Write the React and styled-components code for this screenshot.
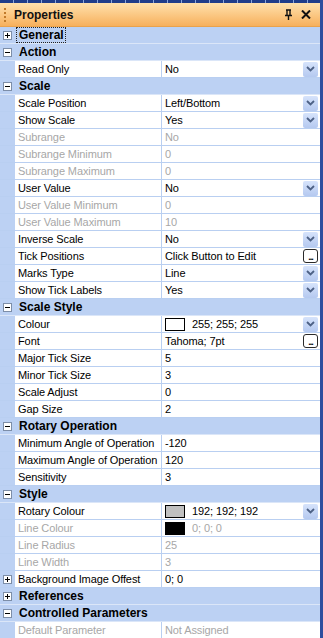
import styled, { createGlobalStyle } from "styled-components";

const Global = createGlobalStyle`
  html, body { margin: 0; padding: 0; background: #bcd1f3; }
  body { font-family: Tahoma, "Liberation Sans", Arial, sans-serif; font-size: 11px; }
`;

const Panel = styled.div`
  width: 323px;
  height: 638px;
  overflow: hidden;
  background: #bcd1f3;
  border-right: 3px solid #2d4e9e;
  box-sizing: border-box;
  display: flex;
  flex-direction: column;
`;

const TopEdge = styled.div`
  height: 3px;
  flex: none;
  background: repeating-linear-gradient(90deg, #1f3d8a 0 13px, #8aa6dc 13px 14px);
`;

const TitleBar = styled.div`
  height: 23px;
  flex: none;
  display: flex;
  align-items: center;
  padding: 0 8px 0 4px;
  background: linear-gradient(#ffe1ad, #f7b05c);
  border-bottom: 1px solid #e9a24c;
`;

const Grip = styled.div`
  width: 2px;
  height: 14px;
  margin-right: 8px;
  background: repeating-linear-gradient(#c07a2a 0 2px, transparent 2px 4px);
`;

const Title = styled.div`
  flex: 1;
  font-weight: bold;
  font-size: 12px;
  color: #111;
`;

const TitleIcon = styled.div`
  width: 12px;
  margin-left: 6px;
  display: flex;
  justify-content: center;
`;

const Row = styled.div`
  height: 16px;
  flex: none;
  display: flex;
  border-bottom: 1px solid ${(p) => (p.$cat ? "#dbe6f8" : "#b9cff1")};
  background: ${(p) => (p.$cat ? "#bcd1f3" : "transparent")};
`;

const Gutter = styled.div`
  width: 15px;
  flex: none;
  display: flex;
  align-items: center;
  justify-content: center;
  background: #bcd1f3;
`;

const Box = styled.div`
  width: 7px;
  height: 7px;
  border: 1px solid #7d8ea8;
  background: #fff;
  position: relative;
  &::before {
    content: "";
    position: absolute;
    left: 1px;
    top: 3px;
    width: 5px;
    height: 1px;
    background: #000;
  }
  &::after {
    content: "";
    display: ${(p) => (p.$open ? "none" : "block")};
    position: absolute;
    left: 3px;
    top: 1px;
    width: 1px;
    height: 5px;
    background: #000;
  }
`;

const CatLabel = styled.div`
  font-weight: bold;
  font-size: 12px;
  line-height: 14px;
  padding: 0 1px 0 2px;
  margin-left: 1px;
  color: #000;
  align-self: center;
  border: 1px dotted ${(p) => (p.$focus ? "#222" : "transparent")};
`;

const Name = styled.div`
  width: 143px;
  flex: none;
  padding-left: 3px;
  line-height: 16px;
  letter-spacing: -0.1px;
  background: #fff;
  color: ${(p) => (p.$dim ? "#a7a7a7" : "#000")};
  border-right: 1px solid #b9cff1;
  white-space: nowrap;
  overflow: hidden;
`;

const Value = styled.div`
  flex: 1;
  display: flex;
  align-items: center;
  padding-left: 3px;
  letter-spacing: -0.1px;
  background: #fff;
  color: ${(p) => (p.$dim ? "#a7a7a7" : "#000")};
  white-space: nowrap;
`;

const ValueText = styled.span`
  flex: 1;
  line-height: 16px;
`;

const Swatch = styled.span`
  width: 18px;
  height: 11px;
  border: 1px solid #000;
  background: ${(p) => p.$color};
  margin-right: 7px;
`;

const DropBtn = styled.div`
  width: 15px;
  height: 15px;
  margin-right: 2px;
  border-radius: 2px;
  background: linear-gradient(#d6e3fb, #b5c9f0);
  display: flex;
  align-items: center;
  justify-content: center;
`;

const DotsBtn = styled.div`
  width: 13px;
  height: 12px;
  margin-right: 2px;
  border: 1px solid #2a2a2a;
  border-radius: 3px;
  background: #fff;
  font-size: 9px;
  line-height: 14px;
  text-align: center;
  font-weight: bold;
  letter-spacing: -1px;
  overflow: hidden;
`;

const Chevron = () => (
  <svg width="9" height="6" viewBox="0 0 9 6">
    <path d="M1 1 L4.5 4.5 L8 1" fill="none" stroke="#4d6185" strokeWidth="1.8" />
  </svg>
);

const rows = [
  { cat: "General", closed: true, focus: true },
  { cat: "Action" },
  { n: "Read Only", v: "No", btn: "drop" },
  { cat: "Scale" },
  { n: "Scale Position", v: "Left/Bottom", btn: "drop" },
  { n: "Show Scale", v: "Yes", btn: "drop" },
  { n: "Subrange", v: "No", dim: true },
  { n: "Subrange Minimum", v: "0", dim: true },
  { n: "Subrange Maximum", v: "0", dim: true },
  { n: "User Value", v: "No", btn: "drop" },
  { n: "User Value Minimum", v: "0", dim: true },
  { n: "User Value Maximum", v: "10", dim: true },
  { n: "Inverse Scale", v: "No", btn: "drop" },
  { n: "Tick Positions", v: "Click Button to Edit", btn: "dots" },
  { n: "Marks Type", v: "Line", btn: "drop" },
  { n: "Show Tick Labels", v: "Yes", btn: "drop" },
  { cat: "Scale Style" },
  { n: "Colour", v: "255; 255; 255", sw: "#fff", btn: "drop" },
  { n: "Font", v: "Tahoma; 7pt", btn: "dots" },
  { n: "Major Tick Size", v: "5" },
  { n: "Minor Tick Size", v: "3" },
  { n: "Scale Adjust", v: "0" },
  { n: "Gap Size", v: "2" },
  { cat: "Rotary Operation" },
  { n: "Minimum Angle of Operation", v: "-120" },
  { n: "Maximum Angle of Operation", v: "120" },
  { n: "Sensitivity", v: "3" },
  { cat: "Style" },
  { n: "Rotary Colour", v: "192; 192; 192", sw: "#c0c0c0", btn: "drop" },
  { n: "Line Colour", v: "0; 0; 0", sw: "#000", dim: true },
  { n: "Line Radius", v: "25", dim: true },
  { n: "Line Width", v: "3", dim: true },
  { n: "Background Image Offest", v: "0; 0", expand: true },
  { cat: "References", closed: true },
  { cat: "Controlled Parameters" },
  { n: "Default Parameter", v: "Not Assigned", dim: true },
];

export default function App() {
  return (
    <Panel>
      <Global />
      <TopEdge />
      <TitleBar>
        <Grip />
        <Title>Properties</Title>
        <TitleIcon>
          <svg width="9" height="11" viewBox="0 0 9 11">
            <path d="M2 1 H7 M3 1 V6 M6 1 V6 M1 6.5 H8 M4.5 7 V11" stroke="#111" strokeWidth="1.4" fill="none" />
          </svg>
        </TitleIcon>
        <TitleIcon>
          <svg width="10" height="9" viewBox="0 0 10 9">
            <path d="M1 0.5 L9 8.5 M9 0.5 L1 8.5" stroke="#111" strokeWidth="2" />
          </svg>
        </TitleIcon>
      </TitleBar>
      {rows.map((r, i) =>
        r.cat ? (
          <Row key={i} $cat>
            <Gutter>
              <Box $open={!r.closed} />
            </Gutter>
            <CatLabel $focus={r.focus}>{r.cat}</CatLabel>
          </Row>
        ) : (
          <Row key={i}>
            <Gutter>{r.expand && <Box />}</Gutter>
            <Name $dim={r.dim}>{r.n}</Name>
            <Value $dim={r.dim}>
              {r.sw && <Swatch $color={r.sw} />}
              <ValueText>{r.v}</ValueText>
              {r.btn === "drop" && (
                <DropBtn>
                  <Chevron />
                </DropBtn>
              )}
              {r.btn === "dots" && <DotsBtn>...</DotsBtn>}
            </Value>
          </Row>
        )
      )}
    </Panel>
  );
}
